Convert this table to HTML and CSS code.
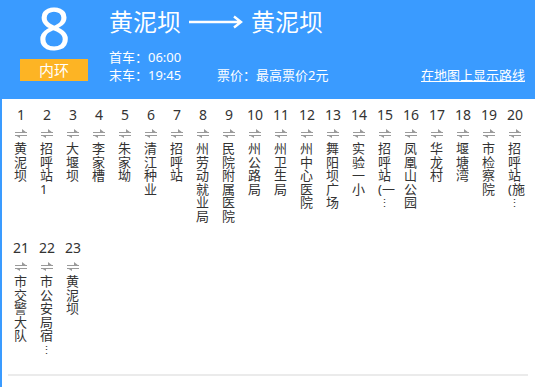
FILE: index.html
```html
<!DOCTYPE html>
<html lang="zh-CN">
<head>
<meta charset="utf-8">
<title>8路 内环</title>
<link rel="stylesheet" href="styles.css">
</head>
<body>
<div class="page">
  <header class="header">
    <div class="route">
      <div class="route-num">8</div>
      <div class="route-tag">内环</div>
    </div>
    <div class="info">
      <div class="title">
        <span>黄泥坝</span>
        <svg class="long-arrow" width="54" height="14" viewBox="0 0 54 14"><path d="M0 7H52M45 1.5L52 7L45 12.5" fill="none" stroke="#fff" stroke-width="2.4"/></svg>
        <span>黄泥坝</span>
      </div>
      <div class="meta">首车：06:00</div>
      <div class="meta meta-row">
        <span class="last">末车：19:45</span>
        <span class="price">票价：最高票价2元</span>
        <a class="map-link" href="#">在地图上显示路线</a>
      </div>
    </div>
  </header>

  <div class="stops">
    <div class="stop"><div class="no">1</div><svg class="dir" width="12" height="9" viewBox="0 0 12 9"><path d="M0 3H12V4H0ZM7 0L12 4H7ZM0 6H12V7H0ZM0 6H5V9Z" fill="#9a9a9a"/></svg><div class="name">黄泥坝</div></div>
    <div class="stop"><div class="no">2</div><svg class="dir" width="12" height="9" viewBox="0 0 12 9"><path d="M0 3H12V4H0ZM7 0L12 4H7ZM0 6H12V7H0ZM0 6H5V9Z" fill="#9a9a9a"/></svg><div class="name">招呼站1</div></div>
    <div class="stop"><div class="no">3</div><svg class="dir" width="12" height="9" viewBox="0 0 12 9"><path d="M0 3H12V4H0ZM7 0L12 4H7ZM0 6H12V7H0ZM0 6H5V9Z" fill="#9a9a9a"/></svg><div class="name">大堰坝</div></div>
    <div class="stop"><div class="no">4</div><svg class="dir" width="12" height="9" viewBox="0 0 12 9"><path d="M0 3H12V4H0ZM7 0L12 4H7ZM0 6H12V7H0ZM0 6H5V9Z" fill="#9a9a9a"/></svg><div class="name">李家槽</div></div>
    <div class="stop"><div class="no">5</div><svg class="dir" width="12" height="9" viewBox="0 0 12 9"><path d="M0 3H12V4H0ZM7 0L12 4H7ZM0 6H12V7H0ZM0 6H5V9Z" fill="#9a9a9a"/></svg><div class="name">朱家坳</div></div>
    <div class="stop"><div class="no">6</div><svg class="dir" width="12" height="9" viewBox="0 0 12 9"><path d="M0 3H12V4H0ZM7 0L12 4H7ZM0 6H12V7H0ZM0 6H5V9Z" fill="#9a9a9a"/></svg><div class="name">清江种业</div></div>
    <div class="stop"><div class="no">7</div><svg class="dir" width="12" height="9" viewBox="0 0 12 9"><path d="M0 3H12V4H0ZM7 0L12 4H7ZM0 6H12V7H0ZM0 6H5V9Z" fill="#9a9a9a"/></svg><div class="name">招呼站</div></div>
    <div class="stop"><div class="no">8</div><svg class="dir" width="12" height="9" viewBox="0 0 12 9"><path d="M0 3H12V4H0ZM7 0L12 4H7ZM0 6H12V7H0ZM0 6H5V9Z" fill="#9a9a9a"/></svg><div class="name">州劳动就业局</div></div>
    <div class="stop"><div class="no">9</div><svg class="dir" width="12" height="9" viewBox="0 0 12 9"><path d="M0 3H12V4H0ZM7 0L12 4H7ZM0 6H12V7H0ZM0 6H5V9Z" fill="#9a9a9a"/></svg><div class="name">民院附属医院</div></div>
    <div class="stop"><div class="no">10</div><svg class="dir" width="12" height="9" viewBox="0 0 12 9"><path d="M0 3H12V4H0ZM7 0L12 4H7ZM0 6H12V7H0ZM0 6H5V9Z" fill="#9a9a9a"/></svg><div class="name">州公路局</div></div>
    <div class="stop"><div class="no">11</div><svg class="dir" width="12" height="9" viewBox="0 0 12 9"><path d="M0 3H12V4H0ZM7 0L12 4H7ZM0 6H12V7H0ZM0 6H5V9Z" fill="#9a9a9a"/></svg><div class="name">州卫生局</div></div>
    <div class="stop"><div class="no">12</div><svg class="dir" width="12" height="9" viewBox="0 0 12 9"><path d="M0 3H12V4H0ZM7 0L12 4H7ZM0 6H12V7H0ZM0 6H5V9Z" fill="#9a9a9a"/></svg><div class="name">州中心医院</div></div>
    <div class="stop"><div class="no">13</div><svg class="dir" width="12" height="9" viewBox="0 0 12 9"><path d="M0 3H12V4H0ZM7 0L12 4H7ZM0 6H12V7H0ZM0 6H5V9Z" fill="#9a9a9a"/></svg><div class="name">舞阳坝广场</div></div>
    <div class="stop"><div class="no">14</div><svg class="dir" width="12" height="9" viewBox="0 0 12 9"><path d="M0 3H12V4H0ZM7 0L12 4H7ZM0 6H12V7H0ZM0 6H5V9Z" fill="#9a9a9a"/></svg><div class="name">实验一小</div></div>
    <div class="stop"><div class="no">15</div><svg class="dir" width="12" height="9" viewBox="0 0 12 9"><path d="M0 3H12V4H0ZM7 0L12 4H7ZM0 6H12V7H0ZM0 6H5V9Z" fill="#9a9a9a"/></svg><div class="name">招呼站(一<span class="more">⋮</span></div></div>
    <div class="stop"><div class="no">16</div><svg class="dir" width="12" height="9" viewBox="0 0 12 9"><path d="M0 3H12V4H0ZM7 0L12 4H7ZM0 6H12V7H0ZM0 6H5V9Z" fill="#9a9a9a"/></svg><div class="name">凤凰山公园</div></div>
    <div class="stop"><div class="no">17</div><svg class="dir" width="12" height="9" viewBox="0 0 12 9"><path d="M0 3H12V4H0ZM7 0L12 4H7ZM0 6H12V7H0ZM0 6H5V9Z" fill="#9a9a9a"/></svg><div class="name">华龙村</div></div>
    <div class="stop"><div class="no">18</div><svg class="dir" width="12" height="9" viewBox="0 0 12 9"><path d="M0 3H12V4H0ZM7 0L12 4H7ZM0 6H12V7H0ZM0 6H5V9Z" fill="#9a9a9a"/></svg><div class="name">堰塘湾</div></div>
    <div class="stop"><div class="no">19</div><svg class="dir" width="12" height="9" viewBox="0 0 12 9"><path d="M0 3H12V4H0ZM7 0L12 4H7ZM0 6H12V7H0ZM0 6H5V9Z" fill="#9a9a9a"/></svg><div class="name">市检察院</div></div>
    <div class="stop"><div class="no">20</div><svg class="dir" width="12" height="9" viewBox="0 0 12 9"><path d="M0 3H12V4H0ZM7 0L12 4H7ZM0 6H12V7H0ZM0 6H5V9Z" fill="#9a9a9a"/></svg><div class="name">招呼站(施<span class="more">⋮</span></div></div>
    <div class="stop"><div class="no">21</div><svg class="dir" width="12" height="9" viewBox="0 0 12 9"><path d="M0 3H12V4H0ZM7 0L12 4H7ZM0 6H12V7H0ZM0 6H5V9Z" fill="#9a9a9a"/></svg><div class="name">市交警大队</div></div>
    <div class="stop"><div class="no">22</div><svg class="dir" width="12" height="9" viewBox="0 0 12 9"><path d="M0 3H12V4H0ZM7 0L12 4H7ZM0 6H12V7H0ZM0 6H5V9Z" fill="#9a9a9a"/></svg><div class="name">市公安局宿<span class="more">⋮</span></div></div>
    <div class="stop"><div class="no">23</div><svg class="dir" width="12" height="9" viewBox="0 0 12 9"><path d="M0 3H12V4H0ZM7 0L12 4H7ZM0 6H12V7H0ZM0 6H5V9Z" fill="#9a9a9a"/></svg><div class="name">黄泥坝</div></div>
  </div>
  <div class="divider"></div>
</div>
</body>
</html>
```

FILE: styles.css
```css
html, body {
  margin: 0;
  padding: 0;
  background: #fff;
}
body {
  font-family: "Noto Sans", "Noto Sans CJK SC", sans-serif;
  color: #333;
}
.page {
  border-left: 2px solid #3a9bff;
  min-height: 387px;
  box-sizing: border-box;
}
.header {
  background: #3a9bff;
  height: 99px;
  display: flex;
  color: #fff;
  margin-left: -2px;
}
.route {
  width: 68px;
  margin-left: 20px;
  display: flex;
  flex-direction: column;
  align-items: center;
}
.route-num {
  font-size: 58px;
  line-height: 56px;
}
.route-tag {
  margin-top: 3px;
  width: 68px;
  height: 22px;
  background: #fdb424;
  text-align: center;
  font-size: 15px;
  line-height: 22px;
}
.info {
  margin-left: 21px;
  flex: 1;
  padding-right: 10px;
}
.title {
  font-size: 24px;
  line-height: 24px;
  margin-top: 10px;
  height: 24px;
  display: flex;
  align-items: center;
}
.long-arrow {
  margin: 0 8px 0 8px;
}
.meta {
  font-size: 13px;
  line-height: 18px;
}
.title + .meta {
  margin-top: 14px;
}
.meta-row {
  display: flex;
}
.last {
  width: 108px;
}
.price {
  flex: 1;
}
.map-link {
  color: #fff;
  text-decoration: underline;
}
.stops {
  display: flex;
  flex-wrap: wrap;
  padding: 6px 0 0 6px;
}
.stop {
  width: 26px;
  height: 133px;
  display: flex;
  flex-direction: column;
  align-items: center;
}
.no {
  font-size: 14px;
  line-height: 20px;
  color: #333;
}
.dir {
  margin-top: 4px;
  display: block;
}
.name {
  align-self: flex-start;
  margin-left: 6px;
  margin-top: 4px;
  width: 18px;
  font-size: 13px;
  line-height: 13.5px;
  word-break: break-all;
  color: #333;
}
.more {
  display: block;
  width: 13px;
  text-align: center;
  font-size: 11px;
  line-height: 13.5px;
  height: 13.5px;
  overflow: hidden;
}
.divider {
  margin: 3px 7px 0 6px;
  border-top: 2px solid #ebebeb;
}
```
